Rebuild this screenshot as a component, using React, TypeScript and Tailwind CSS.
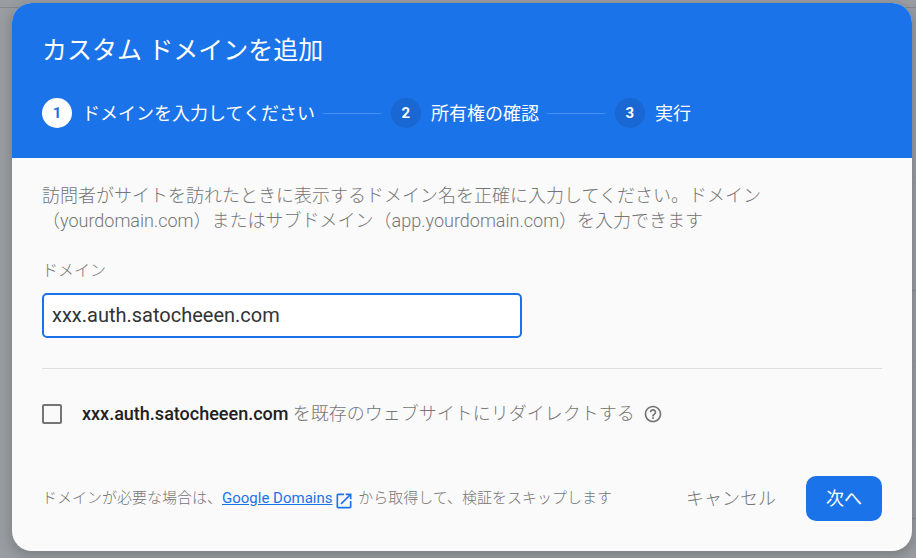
import { Fragment, useState } from "react";

const steps = ["ドメインを入力してください", "所有権の確認", "実行"];

function PageBehind() {
  return (
    <div aria-hidden="true" className="absolute inset-0 flex flex-col overflow-hidden bg-[#999da1]">
      <div className="h-2 shrink-0 border-b border-[#85898e]" />
      <div className="ml-5 h-[170px] shrink-0 border-b border-[#94989c]" />
      <div className="ml-5 h-[113px] shrink-0 border-b border-[#85898e]" />
      <div className="ml-5 h-[76px] shrink-0 border-b border-[#94989c]" />
      <div className="ml-5 h-[76px] shrink-0 border-b border-[#94989c]" />
      <div className="ml-5 h-[76px] shrink-0 border-b border-[#85898e]" />
    </div>
  );
}

function Stepper() {
  return (
    <ol className="mt-[30px] flex items-center">
      {steps.map((label, i) => (
        <Fragment key={label}>
          {i > 0 && <li aria-hidden="true" className="mr-2.5 ml-2 h-px w-[58px] bg-[#4a90f0]" />}
          <li className="flex items-center gap-2.5" aria-current={i === 0 ? "step" : undefined}>
            <span
              className={
                i === 0
                  ? "flex size-[30px] items-center justify-center rounded-full bg-white text-[15px] font-bold text-[#1a73e8]"
                  : "flex size-[30px] items-center justify-center rounded-full bg-[#1967d2] text-[15px] font-bold text-white"
              }
            >
              {i + 1}
            </span>
            <span className="text-lg leading-[25px] font-normal whitespace-nowrap">{label}</span>
          </li>
        </Fragment>
      ))}
    </ol>
  );
}

export default function App() {
  const [domain, setDomain] = useState("xxx.auth.satocheeen.com");
  const [redirect, setRedirect] = useState(false);

  return (
    <div className="relative min-h-screen pt-[3px] pr-1 pb-[7px] pl-3 font-['Roboto','Noto_Sans_CJK_JP',sans-serif]">
      <PageBehind />
      <main
        role="dialog"
        aria-labelledby="title"
        className="relative overflow-hidden rounded-[20px] bg-[#fafafa] shadow-[0_4px_12px_2px_rgba(0,0,0,0.18)]"
      >
        <header className="bg-[#1a73e8] px-[30px] pt-[30px] pb-[30px] text-white">
          <h1 id="title" className="text-[25px] leading-[35px] font-normal">
            カスタム ドメインを追加
          </h1>
          <Stepper />
        </header>

        <form className="px-[30px] pt-[25px] pb-[30px] font-light text-[#757575]" onSubmit={(e) => e.preventDefault()}>
          <p className="text-lg leading-[25px]">
            訪問者がサイトを訪れたときに表示するドメイン名を正確に入力してください。ドメイン（yourdomain.com）またはサブドメイン（app.yourdomain.com）を入力できます
          </p>

          <label htmlFor="domain" className="mt-[25px] block text-base leading-[25px]">
            ドメイン
          </label>
          <input
            id="domain"
            type="text"
            value={domain}
            onChange={(e) => setDomain(e.target.value)}
            className="mt-[10px] block h-[45px] w-full max-w-[480px] rounded-[5px] border-2 border-[#1a73e8] bg-white px-2 pb-0.5 text-xl font-normal text-[#333333] outline-none"
          />

          <hr className="mt-[30px] border-[#e0e0e0]" />

          <div className="mt-8 flex items-center">
            <input
              id="redirect"
              type="checkbox"
              checked={redirect}
              onChange={(e) => setRedirect(e.target.checked)}
              className="size-5 shrink-0 appearance-none rounded-[2px] border-2 border-[#757575] checked:bg-[#1a73e8]"
            />
            <label htmlFor="redirect" className="ml-5 text-lg leading-[25px]">
              <b className="font-medium text-[#212121]">{domain}</b> を既存のウェブサイトにリダイレクトする
            </label>
            <button type="button" aria-label="ヘルプ" className="ml-2">
              <svg viewBox="0 0 24 24" className="size-5" fill="currentColor">
                <path d="M11 18h2v-2h-2v2zm1-16C6.48 2 2 6.48 2 12s4.480 10 10 10 10-4.480 10-10S17.520 2 12 2zm0 18c-4.410 0-8-3.590-8-8s3.590-8 8-8 8 3.590 8 8-3.590 8-8 8zm0-14c-2.210 0-4 1.790-4 4h2c0-1.100.9-2 2-2s2 .9 2 2c0 2-3 1.750-3 5h2c0-2.250 3-2.500 3-5 0-2.210-1.790-4-4-4z" />
              </svg>
            </button>
          </div>

          <div className="mt-[50px] flex items-center justify-between">
            <p className="text-[15px] leading-[25px]">
              ドメインが必要な場合は、
              <a href="#google-domains" className="font-normal text-[#1a73e8]">
                <span className="underline">Google Domains</span>
                <svg viewBox="0 0 24 24" className="ml-0.5 inline size-5 align-bottom" fill="currentColor">
                  <path d="M19 19H5V5h7V3H5c-1.110 0-2 .9-2 2v14c0 1.100.89 2 2 2h14c1.100 0 2-.9 2-2v-7h-2v7zM14 3v2h3.590l-9.830 9.830 1.410 1.410L19 6.410V10h2V3h-7z" />
                </svg>
              </a>{" "}
              から取得して、検証をスキップします
            </p>
            <div className="flex shrink-0 items-center gap-[10px]">
              <button type="button" className="h-[45px] px-5 text-lg">
                キャンセル
              </button>
              <button type="submit" className="h-[45px] rounded-[10px] bg-[#1a73e8] px-5 text-lg font-normal text-white">
                次へ
              </button>
            </div>
          </div>
        </form>
      </main>
    </div>
  );
}
